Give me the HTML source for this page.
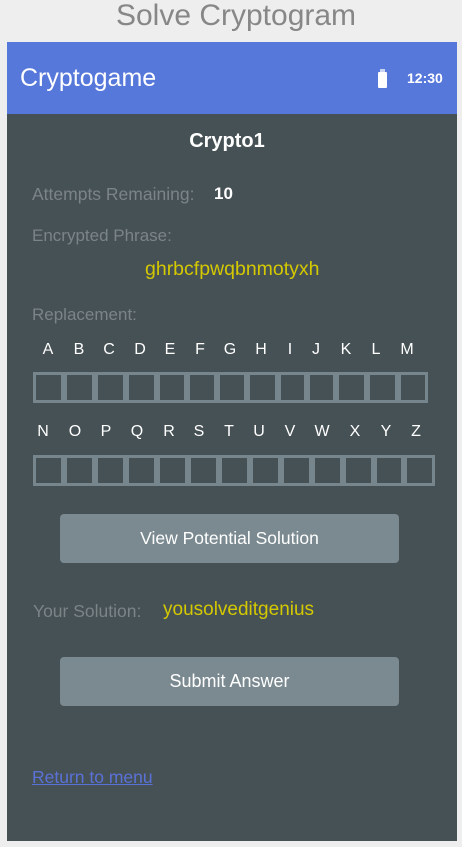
<!DOCTYPE html>
<html><head><meta charset="utf-8"><style>
*{margin:0;padding:0;box-sizing:border-box}
body{width:462px;height:847px;background:#eeeeee;font-family:"Liberation Sans",sans-serif;position:relative;overflow:hidden}
.a{position:absolute;white-space:nowrap}
#frame{position:absolute;left:7px;top:42px;width:450px;height:799px;background:#465155}
#hdr{position:absolute;left:7px;top:42px;width:450px;height:72px;background:#5778db}
.lbl{color:#7b8487;font-size:16px}
.L{color:#fff;font-size:16px;position:absolute;transform:translateX(-50%)}
.row{position:absolute;display:flex}
.row div{border:3px solid #76868c;height:31px}
.btn{position:absolute;left:60px;width:339px;height:49px;background:#7a8a90;border-radius:4px;color:#fff;font-size:18px;text-align:center;line-height:49px}
</style></head><body>
<div class="a" style="left:0;width:472px;text-align:center;top:-1px;font-size:30px;color:#878787;line-height:34px">Solve Cryptogram</div>
<div id="frame"></div>
<div id="hdr"></div>
<div class="a" style="left:20px;top:64px;font-size:25px;color:#fff">Cryptogame</div>
<div class="a" style="left:378px;top:72px;width:9px;height:16px;background:#fff;border-radius:1px"></div>
<div class="a" style="left:380px;top:69px;width:5px;height:3px;background:#c9d3f2"></div>
<div class="a" style="left:407px;top:70px;font-size:14px;color:#fff;font-weight:bold">12:30</div>
<div class="a" style="left:0;width:454px;text-align:center;top:130px;font-size:20px;color:#fff;font-weight:bold">Crypto1</div>
<div class="a lbl" style="left:32px;top:184px;font-size:17.5px">Attempts Remaining:</div>
<div class="a" style="left:214px;top:184px;font-size:17px;color:#fff;font-weight:bold">10</div>
<div class="a lbl" style="left:32px;top:226px;font-size:17px">Encrypted Phrase:</div>
<div class="a" style="left:145px;top:258px;font-size:19.5px;color:#d4c800">ghrbcfpwqbnmotyxh</div>
<div class="a lbl" style="left:32px;top:305px;font-size:17px">Replacement:</div>
<div class="L" style="left:48px;top:341px">A</div><div class="L" style="left:79px;top:341px">B</div><div class="L" style="left:109px;top:341px">C</div><div class="L" style="left:140px;top:341px">D</div><div class="L" style="left:170px;top:341px">E</div><div class="L" style="left:200px;top:341px">F</div><div class="L" style="left:230px;top:341px">G</div><div class="L" style="left:261px;top:341px">H</div><div class="L" style="left:290px;top:341px">I</div><div class="L" style="left:316px;top:341px">J</div><div class="L" style="left:346px;top:341px">K</div><div class="L" style="left:376px;top:341px">L</div><div class="L" style="left:407px;top:341px">M</div>
<div class="row" style="left:33px;top:372px">
<div style="width:31px"></div><div style="width:31px"></div><div style="width:31px"></div><div style="width:31px"></div><div style="width:30px"></div><div style="width:30px"></div><div style="width:30px"></div><div style="width:31px"></div><div style="width:29px"></div><div style="width:29px"></div><div style="width:31px"></div><div style="width:31px"></div><div style="width:30px"></div></div>
<div class="L" style="left:43px;top:423px">N</div><div class="L" style="left:75px;top:423px">O</div><div class="L" style="left:106px;top:423px">P</div><div class="L" style="left:137px;top:423px">Q</div><div class="L" style="left:169px;top:423px">R</div><div class="L" style="left:199px;top:423px">S</div><div class="L" style="left:229px;top:423px">T</div><div class="L" style="left:259px;top:423px">U</div><div class="L" style="left:290px;top:423px">V</div><div class="L" style="left:322px;top:423px">W</div><div class="L" style="left:355px;top:423px">X</div><div class="L" style="left:386px;top:423px">Y</div><div class="L" style="left:416px;top:423px">Z</div>
<div class="row" style="left:33px;top:455px">
<div style="width:31px"></div><div style="width:31px"></div><div style="width:31px"></div><div style="width:31px"></div><div style="width:31px"></div><div style="width:31px"></div><div style="width:31px"></div><div style="width:31px"></div><div style="width:31px"></div><div style="width:31px"></div><div style="width:31px"></div><div style="width:30px"></div><div style="width:31px"></div></div>
<div class="btn" style="top:514px;font-size:17.5px">View Potential Solution</div>
<div class="a lbl" style="left:33px;top:601px;font-size:17.5px">Your Solution:</div>
<div class="a" style="left:163px;top:599px;font-size:19px;color:#d4c800">yousolveditgenius</div>
<div class="btn" style="top:657px">Submit Answer</div>
<div class="a" style="left:32px;top:767px;font-size:17.5px;color:#5a72d8;text-decoration:underline">Return to menu</div>
</body></html>
